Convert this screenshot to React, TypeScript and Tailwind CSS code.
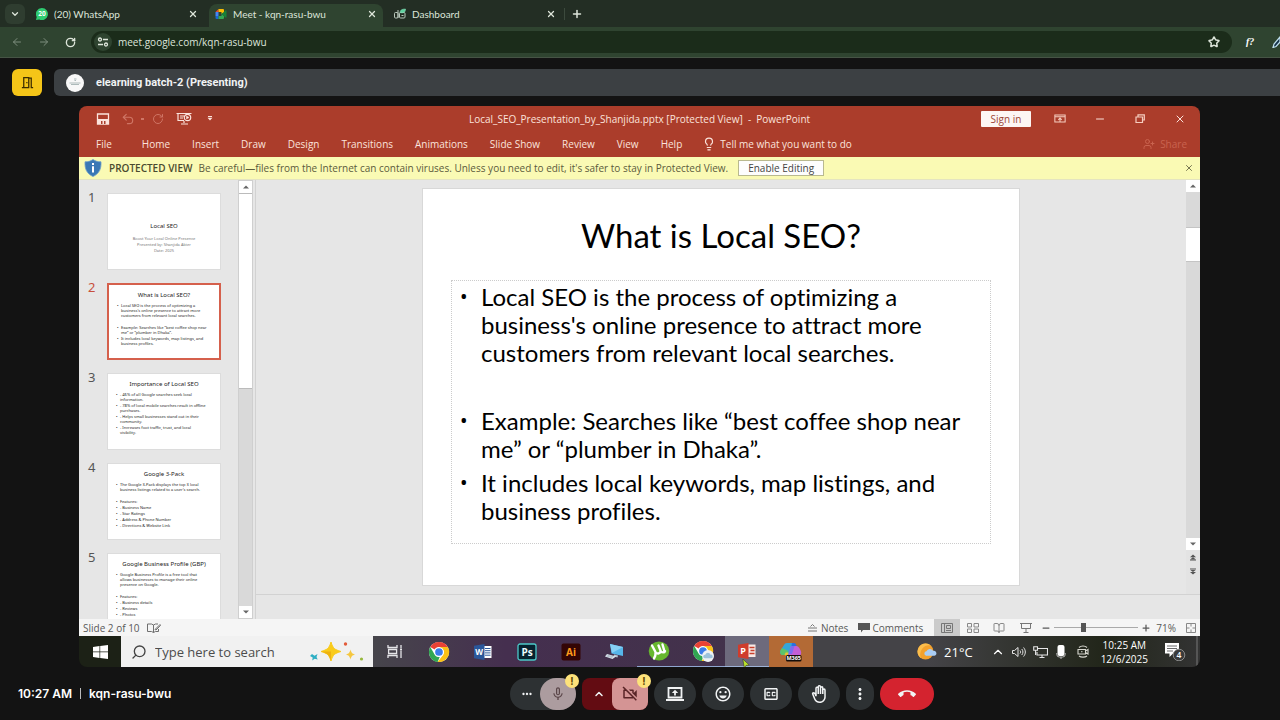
import React from 'react';
import {
  ArrowLeft,
  ArrowRight,
  BookOpen,
  ChevronDown,
  ChevronUp,
  Lightbulb,
  Minus,
  Plus,
  RotateCw,
  Search,
  Star,
  Undo2,
  UserPlus,
  X
} from 'lucide-react';
import {
  MdCallEnd,
  MdMicNone,
  MdMoreHoriz,
  MdMoreVert,
  MdOutlineBackHand,
  MdOutlineClosedCaption,
  MdOutlineEmojiEmotions,
  MdOutlineMeetingRoom,
  MdOutlineVideocamOff
} from 'react-icons/md';

/* ---------- Logos and drawings ---------- */

const WhatsAppIcon = () => (
  <svg viewBox="0 0 12 12" className="w-3 h-3 shrink-0">
    <path d="M6 0a6 6 0 1 1-2.7 11.4L0 12l.7-3A6 6 0 0 1 6 0z" fill="#2fcb71" />
    <text x="6" y="8.3" textAnchor="middle" fontSize="6.5" fontWeight="700" fill="#fff" fontFamily="Open Sans, sans-serif">20</text>
  </svg>
);

const MeetIcon = () => (
  <svg viewBox="0 0 24 24" className="w-3 h-3 shrink-0">
    <path d="M1 8l6-6v6z" fill="#ea4335" />
    <path d="M7 2h9a2 2 0 0 1 2 2v5l-5 3V8H7z" fill="#fbbc04" />
    <path d="M1 8h6v8H1z" fill="#4285f4" />
    <path d="M1 16h6v6H3a2 2 0 0 1-2-2z" fill="#1967d2" />
    <path d="M7 16h6v-4l5 4v4a2 2 0 0 1-2 2H7z" fill="#34a853" />
    <path d="M13 12l8-7c1-.8 2-.3 2 1v12c0 1.300-1 1.800-2 1z" fill="#188038" />
  </svg>
);

const DashboardIcon = () => (
  <svg viewBox="0 0 12 12" className="w-3 h-3 shrink-0" fill="none" stroke="#b8c7bb" strokeWidth="1">
    <rect x=".5" y="4.500" width="3.500" height="5.500" rx="1" />
    <rect x="5.500" y="4.500" width="5.500" height="5.500" rx="1" />
    <path d="M4 2v8M7.500 7.500h2" />
    <path d="M6 4.500C6 2 8 1 11.500 1c0 3-1.500 4.500-5.500 3.500z" fill="#5fd3a0" stroke="#8fe0bd" strokeWidth=".5" />
  </svg>
);

const TuneIcon = () => (
  <svg viewBox="0 0 12 12" className="w-3 h-3" fill="none" stroke="#dfe6dc" strokeWidth="1.300">
    <circle cx="3" cy="3.500" r="1.500" />
    <path d="M6 3.500h5M1 8.500h5" />
    <circle cx="9" cy="8.500" r="1.500" />
  </svg>
);

const SaveIcon = () => (
  <svg viewBox="0 0 14 12" className="w-[14px] h-3">
    <path d="M1.500 1h11v10h-11z" fill="none" stroke="#fbe3dc" strokeWidth="1.300" />
    <path d="M2 6h10v5H2z" fill="#fbe3dc" />
    <path d="M5 8h1.500v3H5zM8 8h1.500v3H8z" fill="#ab3d2b" />
  </svg>
);

const SlideShowIcon = () => (
  <svg viewBox="0 0 16 13" className="w-4 h-[13px]" fill="none" stroke="#fbe3dc" strokeWidth="1.200">
    <path d="M.5 1.500h15M2 1.500v7h6M4 4h4M4 6h3M8 9v2M5 12h7" />
    <circle cx="11.500" cy="5.500" r="3.200" />
    <path d="M10.500 4v3l2.500-1.500z" fill="#fbe3dc" strokeWidth=".5" />
  </svg>
);

const RibbonIcon = () => (
  <svg viewBox="0 0 14 10" className="w-3 h-[9px]" fill="none" stroke="#f6cdbf" strokeWidth="1.200">
    <path d="M1 1h12v8H1zM1 3h12M7 9V4.500M5 6.500l2-2 2 2" />
  </svg>
);

const RestoreIcon = () => (
  <svg viewBox="0 0 10 9" className="w-[10px] h-[9px]" fill="none" stroke="#f6cdbf" strokeWidth="1.200">
    <path d="M1 3h6.500v5.500H1zM3 3V.800h6.300V6H7.500" />
  </svg>
);

const ShieldIcon = () => (
  <svg viewBox="0 0 18 18" className="w-[18px] h-[18px]">
    <path d="M9 .5C6.500 2.300 4 2.800 1 2.800c-.3 7 1.500 11.700 8 14.700 6.500-3 8.300-7.700 8-14.700-3 0-5.500-.5-8-2.300z" fill="#3a78b5" stroke="#6c9dc9" strokeWidth=".8" />
    <path d="M8 7.200h2v6.300H8zM8 4h2v2H8z" fill="#fff" />
  </svg>
);

const SpellIcon = () => (
  <svg viewBox="0 0 14 10" className="w-[14px] h-[10px]" fill="none" stroke="#6f6f6f" strokeWidth="1">
    <path d="M.5 1h4l2 1v7.500l-2-1h-4zM6.500 2l2-1H11M6.500 9.500l2-1h3V6M8 6.500L13 1.500l.7.7L9 7z" />
  </svg>
);

const Triangle = ({ down = false }: { down?: boolean }) => (
  <svg viewBox="0 0 6 4" className="w-[6px] h-1" fill="#666">
    <path d={down ? 'M0 .5h6L3 3.500z' : 'M0 3.500h6L3 .5z'} />
  </svg>
);

const JumpIcon = ({ down = false }: { down?: boolean }) => (
  <svg viewBox="0 0 8 8" className="w-[6px] h-[7px]" fill="#555">
    <path d={down ? 'M0 0h8v1H0zM0 1.500h8L4 4.500zM0 4.500h8L4 8z' : 'M4 0l4 3.500H0zM4 3.500l4 3H0zM0 7h8v1H0z'} />
  </svg>
);

const WindowsIcon = () => (
  <svg viewBox="0 0 15 14" className="w-[15px] h-[14px]" fill="#fff">
    <path d="M0 2l6.500-1v5.500H0zM7.200.9L15 0v6.500H7.200zM0 7.200h6.500V13L0 12zM7.200 7.200H15V14l-7.800-1z" />
  </svg>
);

const SparkleIcon = () => (
  <svg viewBox="0 0 54 22" className="w-[54px] h-[22px]">
    <path d="M21 1c2 6.500 3.500 7.500 10 9.500-6.500 2-8 3-10 9.500-2-6.500-3.500-7.500-10-9.500C17.500 8.500 19 7.500 21 1z" fill="#f9cb1c" stroke="#f9cb1c" />
    <path d="M21 20c-2-6.500-3.500-7.500-10-9.500h10z" fill="#eeb211" />
    <path d="M40.500 8.500c1 3.500 1.500 4 4.800 5-3.300 1-3.800 1.500-4.800 5-1-3.500-1.500-4-4.800-5 3.300-1 3.800-1.500 4.800-5z" fill="#f5c740" />
    <path d="M2 13l2.500 1.800L7.500 13l-1 3 1.200 2.500-3-.7-2.500 1.700.5-3L0 15z" fill="#2eafc4" />
    <circle cx="35.500" cy="3" r="1.700" fill="#e35b3a" />
    <circle cx="51.500" cy="18" r="1.600" fill="#96b83c" />
  </svg>
);

const TaskViewIcon = () => (
  <svg viewBox="0 0 16 13" className="w-4 h-[13px]" fill="none" stroke="#e5e5e8" strokeWidth="1.300">
    <path d="M1 0v2.500h9V0M1 13v-2.500h9V13M1.600 4.500h8v4h-8zM14 0v3M14 6v7" />
    <path d="M13 4.500h2" strokeWidth="2" />
  </svg>
);

const ChromeIcon = ({ cloud = false }: { cloud?: boolean }) => (
  <svg viewBox="0 0 24 24" className="w-[22px] h-[22px]">
    <circle cx="12" cy="12" r="11" fill="#fff" />
    <path d="M12 1a11 11 0 0 1 9.530 5.500H12a5.500 5.500 0 0 0-4.760 2.750L2.470 6.500A11 11 0 0 1 12 1z" fill="#e94235" />
    <path d="M2.470 6.500L7.240 14.750A5.500 5.500 0 0 0 12 17.500l.8-.05L10.500 22.900A11 11 0 0 1 2.470 6.500z" fill="#31a752" />
    <path d="M21.530 6.500a11 11 0 0 1-11 16.400l6.230-8.150a5.500 5.500 0 0 0 .5-4.250L12 6.500z" fill="#fbc116" />
    <circle cx="12" cy="12" r="5.300" fill="#fff" />
    <circle cx="12" cy="12" r="4.200" fill="#3b7de9" />
    {cloud && (
      <g>
        <circle cx="17.500" cy="17.500" r="6.500" fill="#eef2f5" />
        <path d="M14 20a2 2 0 0 1 .5-4 3 3 0 0 1 5.700 0 2 2 0 0 1 .8 4z" fill="#9dc3dc" />
      </g>
    )}
  </svg>
);

const WordIcon = () => (
  <svg viewBox="0 0 18 16" className="w-[18px] h-4">
    <path d="M9 2h8.500v12H9z" fill="#fff" />
    <path d="M11 4.500h5.500M11 6.700h5.500M11 8.900h5.500M11 11.200h5.500" stroke="#2b579a" strokeWidth="1" />
    <path d="M0 1.800L10.500 0v16L0 14.200z" fill="#2b579a" />
    <text x="5.200" y="11" textAnchor="middle" fontSize="8" fontWeight="700" fill="#fff" fontFamily="Open Sans, sans-serif">W</text>
  </svg>
);

const PhotoshopIcon = () => (
  <svg viewBox="0 0 20 18" className="w-5 h-[18px]">
    <rect x="1" y="1" width="18" height="16" rx="2" fill="#06222f" stroke="#4cc9c9" strokeWidth="1.300" />
    <text x="10" y="12.500" textAnchor="middle" fontSize="10" fontWeight="700" fill="#eafcff" fontFamily="Open Sans, sans-serif">Ps</text>
  </svg>
);

const IllustratorIcon = () => (
  <svg viewBox="0 0 20 18" className="w-5 h-[18px]">
    <rect x=".5" y=".5" width="19" height="17" rx="2" fill="#330505" />
    <text x="10" y="12.500" textAnchor="middle" fontSize="10" fontWeight="700" fill="#ff9a1a" fontFamily="Open Sans, sans-serif">Ai</text>
  </svg>
);

const ComputerIcon = () => (
  <svg viewBox="0 0 20 16" className="w-5 h-4">
    <path d="M5 0l13 3v9L6.500 9.500z" fill="#56b6ea" />
    <path d="M5 0l13 3-11 6z" fill="#86d0f5" />
    <path d="M9 10.500l4 1-.5 2-4-1z" fill="#b9c4cf" />
    <path d="M2 10l9 2.500-3.500 2.500L0 12.500z" fill="#dfe8ef" />
    <path d="M2.500 11.200l6 1.600M1.500 12l6 1.600" stroke="#8597a8" strokeWidth=".5" />
  </svg>
);

const TorrentIcon = () => (
  <svg viewBox="0 0 22 20" className="w-[22px] h-5">
    <ellipse cx="11" cy="10" rx="10.300" ry="9.500" fill="#67b72f" />
    <path d="M4 4.500l3.500 6.500c1.500 2.500 5.500 1.500 5-1.500L10.500 4.500M7.500 11.500c.3 2.500-.5 4.500-1.500 6M12.500 10c1.500 2 4 1.500 4.500.2M16.500 10.500L14.500 3.500" fill="none" stroke="#fff" strokeWidth="2.400" strokeLinecap="round" />
  </svg>
);

const PowerPointIcon = () => (
  <svg viewBox="0 0 18 16" className="w-[18px] h-4">
    <path d="M8 1.500h9.500v12.500H8z" fill="#f7e9e6" />
    <path d="M11.500 4.500h5M12.500 7.500h4M11.500 10.500h5" stroke="#c8402d" strokeWidth="1.500" />
    <path d="M0 1.800L10.500 0v16L0 14.200z" fill="#cf3c2c" />
    <text x="5.200" y="11.300" textAnchor="middle" fontSize="9" fontWeight="700" fill="#fff" fontFamily="Open Sans, sans-serif">P</text>
  </svg>
);

const M365Icon = () => (
  <svg viewBox="0 0 22 20" className="w-[22px] h-5">
    <path d="M7 1h6L8.500 13H3C0 13 0 10.500.5 8.500L4 3c.7-1.300 1.500-2 3-2z" fill="#35a6d8" />
    <path d="M2 6l-1.500 2.500C0 10.500 0 13 3 13h4l1.500-4z" fill="#5cc46a" />
    <path d="M12 1h2c1.500 0 2 1 2.500 3h-5z" fill="#2b6fe0" />
    <path d="M11 4h5.500c2 0 5.500 5 4.500 8-.5 1.500-1.500 2-3 2H8z" fill="#c35fd6" />
    <path d="M11 4h3.500L12 12H8.500z" fill="#7b6cf0" />
    <path d="M4.500 13l1.200-2.500h3L7.500 14z" fill="#ecc231" />
    <rect x="6" y="13" width="15.500" height="6.500" rx="1.500" fill="#120d0a" />
    <text x="13.700" y="18.300" textAnchor="middle" fontSize="5.500" fontWeight="700" fill="#fff" fontFamily="Open Sans, sans-serif">M365</text>
  </svg>
);

const WeatherIcon = () => (
  <svg viewBox="0 0 20 17" className="w-5 h-[17px]">
    <circle cx="8.500" cy="8.500" r="8" fill="#f3a12d" />
    <path d="M1 6a8 8 0 0 1 13-3.500A9 9 0 0 0 4 15 8 8 0 0 1 1 6z" fill="#fbbd4c" />
    <path d="M9 12.800a2.300 2.300 0 0 1 .5-4.500 3.600 3.600 0 0 1 6.500-.5 2.600 2.600 0 0 1 1.500 5z" fill="#a9cdf5" />
  </svg>
);

const SpeakerIcon = () => (
  <svg viewBox="0 0 14 12" className="w-[14px] h-3" fill="none" stroke="#e6e6e6" strokeWidth="1">
    <path d="M.5 4.500h2L6 1.500v9l-3.500-3h-2zM8 4.500c.8 1 .8 2 0 3M9.800 3c1.500 2 1.500 4 0 6M11.600 1.500c2.300 3 2.300 6 0 9" />
  </svg>
);

const NetworkIcon = () => (
  <svg viewBox="0 0 15 12" className="w-[15px] h-3" fill="none" stroke="#e6e6e6" strokeWidth="1.100">
    <path d="M5 2.500h9.500v6.500H4V6M9 9v2.500M6.500 11.500h5" />
    <path d="M.7.700h3.800v3.500H.7zM2.600 4.200V9" />
  </svg>
);

const TrayMicIcon = () => (
  <svg viewBox="0 0 10 14" className="w-[10px] h-[14px]">
    <rect x="1.500" y="0" width="7" height="11" rx="2" fill="#fff" />
    <path d="M.8 8v1.500a2.500 2.500 0 0 0 2.500 2.500h3.400a2.500 2.500 0 0 0 2.500-2.500V8M5 12v2" fill="none" stroke="#bbb" strokeWidth="1" />
  </svg>
);

const TrayCamIcon = () => (
  <svg viewBox="0 0 12 13" className="w-3 h-[13px]" fill="none" stroke="#d8d8d0" strokeWidth="1.100">
    <path d="M2 2.500C4 .5 8 .5 10 2.500M2 11c2 1.500 6 1.500 8 0M1 4.500h7.500v4.500H1zM8.500 6l2.500-1.500V9L8.500 7.500" />
    <path d="M4 6.700h1.500" />
  </svg>
);

const PresentIcon = () => (
  <svg viewBox="0 0 20 16" className="w-5 h-4" fill="none" stroke="#f1f3f4" strokeWidth="1.800">
    <path d="M3.500 2h13v9.500h-13zM1 14h18" />
    <path d="M10 9.500V6" />
    <path d="M6.800 7L10 3.800 13.200 7z" fill="#f1f3f4" stroke="none" />
  </svg>
);

const EdgePenIcon = () => (
  <svg viewBox="0 0 8 12" className="w-2 h-3">
    <path d="M1 11.500l1-3.500 6-7v5L4 10.500z" fill="#16324a" stroke="#bfe0ee" strokeWidth="1.200" />
  </svg>
);

/* ---------- Data ---------- */

const tabs = [
  { title: '(20) WhatsApp', icon: WhatsAppIcon, active: false },
  { title: 'Meet - kqn-rasu-bwu', icon: MeetIcon, active: true },
  { title: 'Dashboard', icon: DashboardIcon, active: false }
];

const ribbonTabs = ['Home', 'Insert', 'Draw', 'Design', 'Transitions', 'Animations', 'Slide Show', 'Review', 'View', 'Help'];

// Each bullet is a list of lines, an empty bullet is a blank paragraph
const slides = [
  {
    id: 1,
    title: 'Local SEO',
    cover: ['Boost Your Local Online Presence', 'Presented by: Shanjida Akter', 'Date: 2025'],
    bullets: []
  },
  {
    id: 2,
    title: 'What is Local SEO?',
    bullets: [
      ['Local SEO is the process of optimizing a', "business's online presence to attract more", 'customers from relevant local searches.'],
      [],
      ['Example: Searches like “best coffee shop near', 'me” or “plumber in Dhaka”.'],
      ['It includes local keywords, map listings, and', 'business profiles.']
    ]
  },
  {
    id: 3,
    title: 'Importance of Local SEO',
    bullets: [
      ['- 46% of all Google searches seek local', 'information.'],
      ['- 78% of local mobile searches result in offline', 'purchases.'],
      ['- Helps small businesses stand out in their', 'community.'],
      ['- Increases foot traffic, trust, and local', 'visibility.']
    ]
  },
  {
    id: 4,
    title: 'Google 3-Pack',
    bullets: [
      ['The Google 3-Pack displays the top 3 local', "business listings related to a user's search."],
      [],
      ['Features:'],
      ['- Business Name'],
      ['- Star Ratings'],
      ['- Address & Phone Number'],
      ['- Directions & Website Link']
    ]
  },
  {
    id: 5,
    title: 'Google Business Profile (GBP)',
    bullets: [
      ['Google Business Profile is a free tool that', 'allows businesses to manage their online', 'presence on Google.'],
      [],
      ['Features:'],
      ['- Business details'],
      ['- Reviews'],
      ['- Photos']
    ]
  }
];

const currentSlide = slides[1];

const apps = [
  { name: 'Task View', icon: TaskViewIcon, style: '' },
  { name: 'Google Chrome', icon: ChromeIcon, style: '' },
  { name: 'Word', icon: WordIcon, style: '' },
  { name: 'Photoshop', icon: PhotoshopIcon, style: '' },
  { name: 'Illustrator', icon: IllustratorIcon, style: '' },
  { name: 'This PC', icon: ComputerIcon, style: '' },
  { name: 'uTorrent', icon: TorrentIcon, style: 'border-b border-[#8fa6cf]' },
  { name: 'Chrome window', icon: () => <ChromeIcon cloud />, style: 'border-b border-[#8fa6cf]' },
  { name: 'PowerPoint', icon: PowerPointIcon, style: 'bg-[#6d6a7c] border-b border-[#9db2d6]' },
  { name: 'Microsoft 365', icon: M365Icon, style: 'bg-[#b36a35]' }
];

const callButtons = [
  { name: 'Share screen', icon: <PresentIcon /> },
  { name: 'Send a reaction', icon: <MdOutlineEmojiEmotions className="w-[18px] h-[18px]" /> },
  { name: 'Captions', icon: <MdOutlineClosedCaption className="w-[18px] h-[18px]" /> },
  { name: 'Raise hand', icon: <MdOutlineBackHand className="w-[18px] h-[18px]" /> }
];

/* ---------- Browser ---------- */

const BrowserBar = () => (
  <header className="font-['Open_Sans',sans-serif] text-[#dde5da]">
    <div className="h-[27px] bg-[#232e24] flex items-stretch pl-[5px]">
      <button aria-label="Search tabs" className="w-5 h-5 mt-1 mr-[5px] rounded-md bg-[#2f3d30] flex items-center justify-center">
        <ChevronDown className="w-[10px] h-[10px]" strokeWidth={3} />
      </button>
      <nav className="flex gap-[5px] pt-1">
        {tabs.map((tab) => {
          const Icon = tab.icon;
          return (
            <div key={tab.title} className={`w-[174px] px-[6px] flex items-center pb-1 rounded-t-lg ${tab.active ? 'bg-[#2f4430]' : ''}`}>
              <button className="flex-1 flex items-center gap-[6px] font-['Lato',sans-serif] text-[10px] leading-4">
                <Icon />
                {tab.title}
              </button>
              <button aria-label="Close tab">
                <X className="w-[10px] h-[10px]" strokeWidth={3} />
              </button>
            </div>
          );
        })}
      </nav>
      <button aria-label="New tab" className="h-3 mt-2 ml-[2px] pl-[6px] border-l border-[#3c4a3d] flex items-center">
        <Plus className="w-3 h-3" strokeWidth={3} />
      </button>
    </div>
    <div className="h-[31px] bg-[#2f4430] border-b border-[#465445] flex items-center">
      <div className="w-[91px] flex items-center gap-[15px] pl-[11px]">
        <button aria-label="Back" className="text-[#7d8d7d]"><ArrowLeft className="w-3 h-3" /></button>
        <button aria-label="Forward" className="text-[#7d8d7d]"><ArrowRight className="w-3 h-3" /></button>
        <button aria-label="Reload"><RotateCw className="w-[11px] h-[11px]" strokeWidth={3} /></button>
      </div>
      <div className="flex-1 h-[22px] rounded-full bg-[#1b2c1a] flex items-center px-[3px]">
        <button aria-label="Site information" className="w-[18px] h-[18px] rounded-full bg-[#2f4430] flex items-center justify-center">
          <TuneIcon />
        </button>
        <input
          aria-label="Address"
          defaultValue="meet.google.com/kqn-rasu-bwu"
          className="flex-1 ml-[6px] bg-transparent outline-none text-[10px] leading-4 font-medium"
        />
        <button aria-label="Bookmark" className="mr-[9px]"><Star className="w-3 h-3" strokeWidth={3} /></button>
      </div>
      <div className="w-12 flex items-center justify-between pl-[14px]">
        <button aria-label="Font finder" className="font-['Liberation_Serif',serif] italic font-bold text-[10px] leading-4 text-white">f?</button>
        <button aria-label="Pen"><EdgePenIcon /></button>
      </div>
    </div>
  </header>
);

/* ---------- PowerPoint ---------- */

const TitleBar = () => (
  <div className="bg-[#ab3d2b] text-[#fbe3dc] text-[10px] leading-4">
    <div className="h-[25px] grid grid-cols-[1fr_auto_1fr] items-center">
      <div className="flex items-center pl-[17px]">
        <button aria-label="Save"><SaveIcon /></button>
        <button aria-label="Undo" className="ml-[11px] text-[#cf7565]"><Undo2 className="w-[14px] h-[14px]" /></button>
        <button aria-label="Undo history" className="ml-[6px] w-[3px] h-[2px] bg-[#cf7565]"></button>
        <button aria-label="Redo" className="ml-[8px] text-[#cf7565]"><RotateCw className="w-3 h-3" /></button>
        <button aria-label="Start slide show" className="ml-[12px]"><SlideShowIcon /></button>
        <button aria-label="Customize toolbar" className="ml-[15px]">
          <svg viewBox="0 0 6 5" className="w-[6px] h-[5px]" fill="#fbe3dc"><path d="M1 0h4v1H1zM.5 1.800h5L3 4.500z" /></svg>
        </button>
      </div>
      <h1>Local_SEO_Presentation_by_Shanjida.pptx [Protected View] &nbsp;-&nbsp; PowerPoint</h1>
      <div className="flex items-center justify-end pr-[14px]">
        <button className="w-[50px] h-4 bg-[#fdf6f4] text-[#9c4636] rounded-[1px] mr-[23px]">Sign in</button>
        <button aria-label="Ribbon display options"><RibbonIcon /></button>
        <button aria-label="Minimize" className="ml-[28px]"><Minus className="w-3 h-3" /></button>
        <button aria-label="Restore" className="ml-[29px]"><RestoreIcon /></button>
        <button aria-label="Close" className="ml-[29px]"><X className="w-3 h-3" /></button>
      </div>
    </div>
    <div className="h-[26px] flex items-center pl-[17px] pr-[13px]">
      <button>File</button>
      <nav className="flex gap-[22px] ml-[30px]">
        {ribbonTabs.map((name) => (
          <button key={name}>{name}</button>
        ))}
      </nav>
      <button className="flex items-center gap-1 ml-[20px]">
        <Lightbulb className="w-[14px] h-[14px]" />
        Tell me what you want to do
      </button>
      <button className="flex items-center gap-[5px] ml-auto text-[#c9634f]">
        <UserPlus className="w-3 h-3" />
        Share
      </button>
    </div>
  </div>
);

const ProtectedBar = () => (
  <div className="h-[23px] bg-[#fafab4] border-b border-[#e4e4c0] flex items-center pl-[5px] pr-[6px] text-[10px] leading-4 text-[#5c5b3c]">
    <ShieldIcon />
    <strong className="ml-[7px] font-semibold text-[#4a4a2e]">PROTECTED VIEW</strong>
    <span className="ml-[6px]">Be careful—files from the Internet can contain viruses. Unless you need to edit, it's safer to stay in Protected View.</span>
    <button className="ml-[10px] w-[86px] h-4 bg-[#fdfdfd] border border-[#b9b98f] flex items-center justify-center text-[#444]">Enable Editing</button>
    <button aria-label="Close message" className="ml-auto"><X className="w-[10px] h-[10px]" /></button>
  </div>
);

const Thumbnail = ({ slide }: { slide: (typeof slides)[number] }) => {
  const selected = slide.id === currentSlide.id;
  return (
    <li className="flex items-start h-[90px]">
      <span className={`w-[26px] pl-[7px] text-[13px] leading-2 ${selected ? 'text-[#c8503c]' : 'text-[#555]'}`}>{slide.id}</span>
      <button
        className={`w-[114px] h-[77px] bg-white text-left text-[#222] flex flex-col ${
          selected ? 'border-2 border-[#d5604c]' : 'border border-[#dcdcdc]'
        }`}
      >
        {slide.cover ? (
          <span className="block w-full text-center pt-[28px]">
            <span className="block text-[6px] leading-2">{slide.title}</span>
            <span className="block pt-[6px] text-[4px] leading-[6px] text-[#777]">
              {slide.cover.map((line) => (
                <span key={line} className="block">{line}</span>
              ))}
            </span>
          </span>
        ) : (
          <span className="block w-full">
            <span className="block text-center text-[6px] leading-2 pt-[6px] pb-[4px]">{slide.title}</span>
            {slide.bullets.map((lines, index) => (
              <span key={index} className="flex pl-2 pb-px text-[4px] leading-[5px] min-h-[6px]">
                <span className="w-[4px]">{lines.length > 0 ? '•' : ''}</span>
                <span>
                  {lines.map((line) => (
                    <span key={line} className="block whitespace-nowrap">{line}</span>
                  ))}
                </span>
              </span>
            ))}
          </span>
        )}
      </button>
    </li>
  );
};

const ThumbnailPane = () => (
  <aside className="w-[177px] flex border-r border-[#d2d2d2]">
    <ol className="flex-1 overflow-hidden pt-[13px] pl-[2px] font-['Noto_Sans',sans-serif]">
      {slides.map((slide) => (
        <Thumbnail key={slide.id} slide={slide} />
      ))}
    </ol>
    <div className="w-[15px] mr-[2px] flex flex-col bg-[#d9d9d9] border border-[#cfcfcf]">
      <button aria-label="Scroll up" className="h-3 bg-white flex items-center justify-center"><Triangle /></button>
      <div className="h-[196px] bg-white border-y border-[#bbb]"></div>
      <button aria-label="Scroll down" className="h-3 mt-auto bg-white flex items-center justify-center"><Triangle down /></button>
    </div>
  </aside>
);

const Slide = () => (
  <article className="w-[598px] h-[398px] bg-white border border-[#d8d8d8] px-7 text-black font-['Lato',sans-serif] [font-variant-ligatures:none]">
    <h2 className="h-[91px] pt-[26px] text-center text-[33px] leading-10">{currentSlide.title}</h2>
    <ul className="h-[264px] border border-dotted border-[#ccc] pt-[2px] pl-2 flex flex-col gap-[6px] text-[24px] leading-7">
      {currentSlide.bullets.map((lines, index) => (
        <li key={index} className="flex min-h-7">
          <span className="w-[21px] font-['Noto_Sans',sans-serif] text-[20px] leading-7">{lines.length > 0 ? '•' : ''}</span>
          <span>
            {lines.map((line) => (
              <span key={line} className="block whitespace-nowrap">{line}</span>
            ))}
          </span>
        </li>
      ))}
    </ul>
  </article>
);

const SlideArea = () => (
  <main className="flex-1 flex flex-col">
    <div className="flex-1 flex">
      <div className="flex-1 flex items-center justify-center">
        <Slide />
      </div>
      <div className="w-[14px] flex flex-col bg-[#e3e3e3]">
        <button aria-label="Previous" className="h-3 bg-white flex items-center justify-center"><Triangle /></button>
        <div className="flex-1 bg-[#d9d9d9] pt-[35px]">
          <div className="h-[35px] bg-white border-y border-[#c4c4c4]"></div>
        </div>
        <button aria-label="Next" className="h-3 bg-white flex items-center justify-center"><Triangle down /></button>
        <button aria-label="Previous slide" className="h-[15px] flex items-center justify-center"><JumpIcon /></button>
        <button aria-label="Next slide" className="h-[13px] flex items-center justify-center"><JumpIcon down /></button>
        <div className="h-4"></div>
      </div>
    </div>
    <div className="h-[25px] border-t border-[#d2d2d2]"></div>
  </main>
);

const StatusBar = () => (
  <div className="h-[17px] bg-[#f5f5f5] flex items-center pl-1 pr-1 text-[10px] leading-4 text-[#595959]">
    <span>Slide 2 of 10</span>
    <button aria-label="Spelling" className="ml-[7px]"><SpellIcon /></button>
    <button className="ml-auto flex items-center gap-1">
      <svg viewBox="0 0 9 8" className="w-[9px] h-2" fill="none" stroke="#777" strokeWidth="1"><path d="M0 4h9M0 7h9M2.500 2.500L4.500.5l2 2" /></svg>
      Notes
    </button>
    <button className="ml-[10px] flex items-center gap-[2px]">
      <svg viewBox="0 0 12 10" className="w-3 h-[10px]" fill="#555"><path d="M0 0h12v7H5L3 9.500V7H0z" /></svg>
      Comments
    </button>
    <button aria-label="Normal view" className="ml-[11px] w-[26px] h-[17px] bg-[#cbcbcb] flex items-center justify-center">
      <svg viewBox="0 0 12 10" className="w-3 h-[10px]" fill="none" stroke="#777"><path d="M.5.500h11v9H.5zM3.500.500v9M5.500 2.500h4v3h-4zM5 7.500h5" /></svg>
    </button>
    <button aria-label="Slide sorter" className="ml-[7px]">
      <svg viewBox="0 0 12 10" className="w-3 h-[10px]" fill="none" stroke="#888"><path d="M.5.500h4v3.500h-4zM7 .5h4.500v3.500H7zM.5 6h4v3.500h-4zM7 6h4.500v3.500H7z" /></svg>
    </button>
    <button aria-label="Reading view" className="ml-[14px] text-[#888]"><BookOpen className="w-3 h-3" /></button>
    <button aria-label="Slide show" className="ml-[15px]">
      <svg viewBox="0 0 12 10" className="w-3 h-[10px]" fill="none" stroke="#777"><path d="M0 .5h12M1.500.500v5h9v-5M6 5.500V9M3.500 9.500h5" /></svg>
    </button>
    <button aria-label="Zoom out" className="ml-[9px]"><Minus className="w-[10px] h-[10px]" strokeWidth={3} /></button>
    <input
      type="range"
      aria-label="Zoom"
      min={0}
      max={100}
      defaultValue={34}
      className="w-[84px] h-3 mx-[3px] appearance-none bg-transparent [&::-webkit-slider-runnable-track]:h-px [&::-webkit-slider-runnable-track]:bg-[#aaa] [&::-webkit-slider-thumb]:appearance-none [&::-webkit-slider-thumb]:w-[5px] [&::-webkit-slider-thumb]:h-[9px] [&::-webkit-slider-thumb]:-mt-1 [&::-webkit-slider-thumb]:bg-[#555]"
    />
    <button aria-label="Zoom in"><Plus className="w-[10px] h-[10px]" strokeWidth={3} /></button>
    <span className="ml-[5px]">71%</span>
    <button aria-label="Fit slide" className="ml-[10px]">
      <svg viewBox="0 0 10 10" className="w-[10px] h-[10px]" fill="none" stroke="#888"><path d="M.5.500h9v9h-9zM5 1v2.500M5 6.500V9M1 5h2.500M6.500 5H9" /></svg>
    </button>
  </div>
);

const Taskbar = () => (
  <div className="relative h-[31px] flex items-stretch text-white">
    <button aria-label="Start" className="w-[42px] flex items-center justify-center bg-[#1c2116]"><WindowsIcon /></button>
    <label className="w-[252px] bg-[#f1f1f1] flex items-center pl-[10px] pr-[9px]">
      <Search className="w-4 h-4 text-[#444] -scale-x-100" />
      <input
        aria-label="Search"
        placeholder="Type here to search"
        className="flex-1 min-w-0 ml-2 bg-transparent outline-none text-[13px] leading-4 placeholder:text-[#4c4c4c]"
      />
      <SparkleIcon />
    </label>
    <div className="flex bg-linear-to-r from-[#46454b] via-[#452f4f] via-30% to-[#413349]">
      {apps.map((app) => {
        const Icon = app.icon;
        return (
          <button key={app.name} aria-label={app.name} className={`w-11 flex items-center justify-center ${app.style}`}>
            <Icon />
          </button>
        );
      })}
    </div>
    <div className="flex-1 flex items-center justify-end bg-linear-to-r from-[#444347] from-30% via-[#22261a] via-75% to-[#333333]">
      <button className="flex items-center gap-[7px] mr-[18px] text-[13px] leading-4">
        <WeatherIcon />
        21°C
      </button>
      <button aria-label="Show hidden icons"><ChevronUp className="w-[14px] h-[14px]" /></button>
      <button aria-label="Volume" className="ml-[7px]"><SpeakerIcon /></button>
      <button aria-label="Network" className="ml-[7px]"><NetworkIcon /></button>
      <button aria-label="Microphone in use" className="ml-[8px]"><TrayMicIcon /></button>
      <button aria-label="Meet now" className="ml-[11px]"><TrayCamIcon /></button>
      <button className="ml-[12px] text-[10px] leading-[14px] text-center">
        <span className="block">10:25 AM</span>
        <span className="block">12/6/2025</span>
      </button>
      <button aria-label="Notifications" className="ml-[16px] mr-2 w-6 h-[18px]">
        <svg viewBox="0 0 24 18" className="w-6 h-[18px]">
          <path d="M1 0h14v10.500H9L5.500 14v-3.500H1z" fill="#fff" />
          <path d="M3 3h10M3 5.500h10M3 8h6" stroke="#444" strokeWidth=".8" />
          <circle cx="15" cy="12" r="5.800" fill="#3b3b3b" stroke="#8a8a8a" strokeWidth="1" />
          <text x="15" y="15" textAnchor="middle" fontSize="8.500" fontWeight="600" fill="#fff" fontFamily="Open Sans, sans-serif">4</text>
        </svg>
      </button>
      <div className="w-[2px] h-full bg-[#555] mr-[2px]"></div>
    </div>
    {/* Presenter's cursor */}
    <svg viewBox="0 0 10 10" className="absolute left-[662px] bottom-0 w-[10px] h-2">
      <path d="M1 0l8 7.500-4 .5-2 4z" fill="#b9e32b" stroke="#222" strokeWidth=".6" />
    </svg>
  </div>
);

const Presentation = () => (
  <section className="flex-1 min-h-0 ml-[79px] mr-20 mt-[10px] rounded-lg overflow-hidden flex flex-col font-['Open_Sans',sans-serif]">
    <TitleBar />
    <ProtectedBar />
    <div className="flex-1 min-h-0 flex bg-[#e6e6e6]">
      <ThumbnailPane />
      <SlideArea />
    </div>
    <StatusBar />
    <Taskbar />
  </section>
);

/* ---------- Meet ---------- */

const Alert = () => (
  <span className="absolute -top-1 -right-[3px] w-[14px] h-[14px] rounded-full bg-[#fde27a] text-[#5b4300] text-[10px] leading-[14px] font-bold text-center">!</span>
);

const CallBar = () => (
  <footer className="h-[53px] flex items-center text-white">
    <div className="w-[510px] pl-[18px] flex items-center text-xs leading-4 font-semibold">
      <span>10:27 AM</span>
      <span className="mx-2 w-px h-[11px] bg-[#bbb]"></span>
      <span>kqn-rasu-bwu</span>
    </div>
    <div className="flex items-center gap-[6px] text-[#f1f3f4]">
      <div className="flex h-8 rounded-full bg-[#2d3133]">
        <button aria-label="Audio settings" className="w-[30px] pl-1 flex items-center justify-center"><MdMoreHoriz className="w-[14px] h-[14px]" /></button>
        <button aria-label="Turn on microphone" className="relative w-9 rounded-full bg-[#ac9c9f] text-[#5a4548] flex items-center justify-center">
          <MdMicNone className="w-4 h-4" />
          <Alert />
        </button>
      </div>
      <div className="flex h-8 rounded-lg bg-[#630c12]">
        <button aria-label="Video settings" className="w-[30px] pl-1 flex items-center justify-center"><ChevronUp className="w-3 h-3" strokeWidth={3} /></button>
        <button aria-label="Turn on camera" className="relative w-9 rounded-lg bg-[#d49494] text-[#5a2527] flex items-center justify-center">
          <MdOutlineVideocamOff className="w-[18px] h-[18px]" />
          <Alert />
        </button>
      </div>
      {callButtons.map((button) => (
        <button key={button.name} aria-label={button.name} className="w-[42px] h-8 rounded-full bg-[#2d3133] flex items-center justify-center">
          {button.icon}
        </button>
      ))}
      <button aria-label="More options" className="w-7 h-8 rounded-full bg-[#2d3133] flex items-center justify-center">
        <MdMoreVert className="w-[18px] h-[18px]" />
      </button>
      <button aria-label="Leave call" className="w-[54px] h-8 rounded-full bg-[#d4232f] flex items-center justify-center">
        <MdCallEnd className="w-[18px] h-[18px]" />
      </button>
    </div>
  </footer>
);

const App = () => {
  return (
    <div className="h-screen flex flex-col bg-[#131313] overflow-hidden font-['Inter',sans-serif]">
      <BrowserBar />
      <div className="flex items-center gap-3 pl-3 pt-[11px]">
        <button aria-label="Leave room" className="w-[30px] h-[27px] rounded-md bg-[#f5c518] text-[#3b2c00] flex items-center justify-center">
          <MdOutlineMeetingRoom className="w-[15px] h-[15px]" />
        </button>
        <div className="flex-1 h-[27px] rounded-l-md bg-[#3c4043] flex items-center gap-3 pl-3 font-['Roboto',sans-serif] text-[11px] leading-4 font-bold text-[#f1f3f4]">
          <svg viewBox="0 0 18 18" className="w-[18px] h-[18px]">
            <circle cx="9" cy="9" r="9" fill="#f8f8f8" />
            <path d="M8 5h2.500M8.500 6.500H10M3.500 9h11M5 10.500h8" stroke="#9aa" strokeWidth=".8" />
          </svg>
          elearning batch-2 (Presenting)
        </div>
      </div>
      <Presentation />
      <CallBar />
    </div>
  );
};

export default App;
